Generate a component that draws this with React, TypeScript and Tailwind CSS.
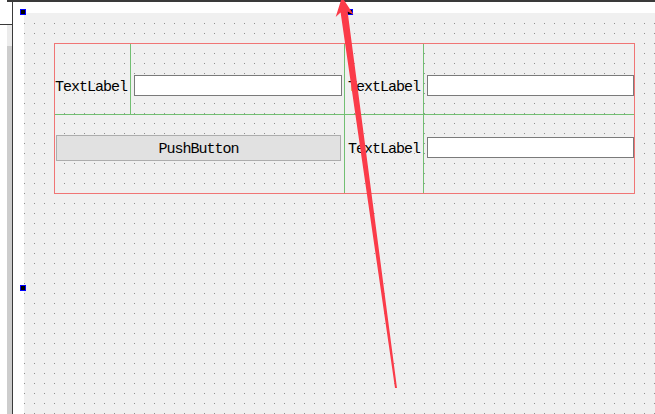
import React from 'react'

const GRID_LINE = 'border-[#72bf72]'

function Label({ text }: { text: string }) {
  return (
    <div className="flex h-[21px] items-center whitespace-nowrap pt-[3px] text-[15px] leading-none tracking-[-1px] text-black">
      {text}
    </div>
  )
}

function LineEdit({ width }: { width: string }) {
  return <div className={`h-[21px] ${width} border border-[#7a7a7a] bg-white`} />
}

function Handle({ className }: { className: string }) {
  return (
    <div className={`absolute h-[6px] w-[6px] border border-[#0000ff] bg-black ${className}`} />
  )
}

export default function App() {
  return (
    <div className="relative flex h-[414px] w-[655px] overflow-hidden bg-white [font-family:'Liberation_Mono','Courier_New',monospace]">
      {/* left strip of the designer window */}
      <div className="flex w-[12px] flex-col">
        <div className="ml-[7px] h-[2px] bg-[#3a3a3a]" />
        <div className="h-[22px]" />
        <div className="h-px bg-[#3a3a3a]" />
        <div className="flex flex-1">
          <div className="w-[7px]" />
          <div className="flex flex-1 flex-col">
            <div className="h-[21px] bg-[#ececec]" />
            <div className="flex-1 bg-[#cdcdcd]" />
          </div>
        </div>
      </div>
      <div className="w-px bg-[#3a3a3a]" />

      {/* form area */}
      <div className="flex flex-1 flex-col">
        <div className="h-[2px] bg-[#3a3a3a]" />
        <div className="flex-1 pl-[11px] pt-[11px]">
          <div className="h-full border-t border-[#f0f0f0] bg-[#f0f0f0] bg-[linear-gradient(to_bottom,transparent_1px,#f0f0f0_1px),linear-gradient(to_right,#8f8f8f_1px,transparent_1px)] bg-[size:10px_10px] bg-[position:0_9px] pl-[30px] pt-[29px]">
            {/* grid layout */}
            <div className="grid h-[151px] w-[581px] grid-cols-[76px_214px_79px_210px] grid-rows-[71px_78px] border border-[#f07575]">
              <div className={`border-b border-r ${GRID_LINE} pt-[31px]`}>
                <Label text="TextLabel" />
              </div>
              <div className={`border-b border-r ${GRID_LINE} pl-[3px] pt-[31px]`}>
                <LineEdit width="w-[208px]" />
              </div>
              <div className={`border-b border-r ${GRID_LINE} pl-[3px] pt-[31px]`}>
                <Label text="TextLabel" />
              </div>
              <div className={`border-b ${GRID_LINE} pl-[3px] pt-[31px]`}>
                <LineEdit width="w-[207px]" />
              </div>

              <div className={`col-span-2 border-r ${GRID_LINE} pl-[1px] pt-[20px]`}>
                <div className="flex h-[26px] w-[285px] items-center justify-center border border-[#adadad] bg-[#e1e1e1] pt-[3px] text-[15px] leading-none tracking-[-1px] text-black">
                  PushButton
                </div>
              </div>
              <div className={`border-r ${GRID_LINE} pl-[3px] pt-[22px]`}>
                <Label text="TextLabel" />
              </div>
              <div className="pl-[3px] pt-[22px]">
                <LineEdit width="w-[207px]" />
              </div>
            </div>
          </div>
        </div>
      </div>

      {/* selection handles */}
      <Handle className="left-[20px] top-[9px]" />
      <Handle className="left-[347px] top-[9px]" />
      <Handle className="left-[20px] top-[285px]" />

      {/* annotation arrow */}
      <svg className="pointer-events-none absolute inset-0" width="655" height="414" viewBox="0 0 655 414">
        <polygon
          points="342,-3 353.5,14.6 347.6,11.4 397,387.9 395,388.1 340.6,12.4 335.7,17 "
          fill="#fb3b49"
        />
      </svg>
    </div>
  )
}
